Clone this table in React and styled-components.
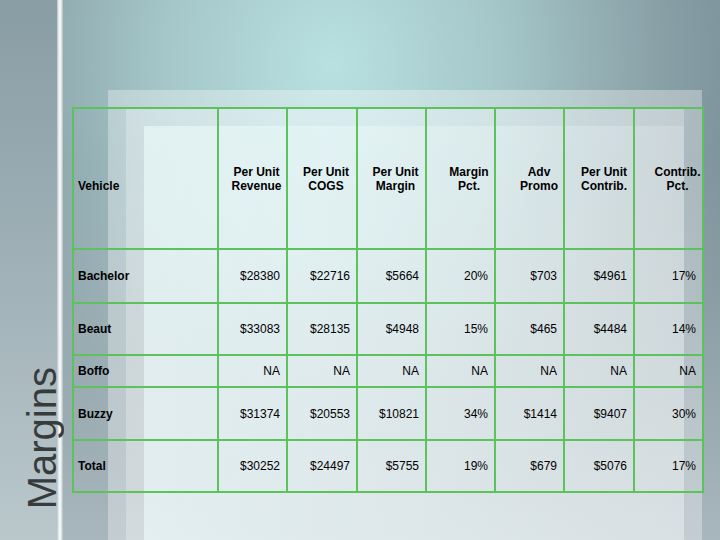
import styled, { createGlobalStyle } from 'styled-components';

const GlobalStyle = createGlobalStyle`
  html,
  body {
    margin: 0;
    padding: 0;
  }

  body {
    font-family: 'Liberation Sans', Arial, sans-serif;
  }
`;

const Slide = styled.div`
  width: 720px;
  height: 540px;
  display: flex;
  overflow: hidden;
`;

const Sidebar = styled.aside`
  width: 57px;
  flex: none;
  display: flex;
  flex-direction: column;
  justify-content: flex-end;
  padding-bottom: 31px;
  box-sizing: border-box;
  background: linear-gradient(180deg, #899da5 0%, #a2b3b9 55%, #bac8cc 100%);
`;

const Title = styled.h1`
  align-self: flex-start;
  margin: 0 0 0 22px;
  font-size: 40px;
  line-height: 40px;
  font-weight: normal;
  color: #383b3c;
  writing-mode: vertical-rl;
  transform: rotate(180deg);
  position: relative;
  z-index: 1;
`;

const Divider = styled.div`
  width: 6px;
  flex: none;
  background: linear-gradient(
    90deg,
    #b6c1c4 0%,
    #e9eeef 30%,
    #fbfcfc 50%,
    #e4e9ea 70%,
    #aebbbf 100%
  );
`;

// panels are stacked translucent sheets over the main gradient
const sheet = (a) => `linear-gradient(rgba(255,255,255,${a}), rgba(255,255,255,${a}))`;

const Stage = styled.main`
  flex: 1;
  padding: 107px 0 0 9px;
  box-sizing: border-box;
  background:
    linear-gradient(90deg, rgba(240, 255, 255, 0.55), rgba(232, 240, 242, 0.25)) 81px 126px / 540px 414px no-repeat,
    ${sheet(0.26)} 63px 108px / 558px 432px no-repeat,
    ${sheet(0.32)} 45px 90px / 594px 450px no-repeat,
    linear-gradient(180deg, rgba(225, 232, 234, 0) 30%, rgba(225, 232, 234, 0.45) 100%),
    radial-gradient(ellipse 430px 470px at 41% 12%, #b9e1e2 0%, #a4c6c9 40%, #8aa1a8 75%, #7a8f98 100%);
`;

const Grid = styled.table`
  width: 632px;
  border-collapse: collapse;
  table-layout: fixed;
  font-size: 12px;
  color: #000;
`;

const Row = styled.tr`
  height: ${(p) => p.$h}px;
`;

const Cell = styled.td`
  border: 2px solid #5cc25c;
  padding: 0;
  vertical-align: middle;
`;

const HeadCell = styled(Cell).attrs({ as: 'th' })`
  font-weight: bold;
  line-height: 14px;
  text-align: center;
  padding-left: ${(p) => p.$shift}px;
`;

const VehicleHead = styled(Cell).attrs({ as: 'th' })`
  font-weight: bold;
  text-align: left;
  line-height: 14px;
  padding: 14px 0 0 4px;
`;

const LabelCell = styled(Cell)`
  font-weight: bold;
  text-align: left;
  padding-left: 4px;
`;

const ValueCell = styled(Cell)`
  text-align: right;
  padding-right: 6px;
`;

const columns = [
  { w: 145 },
  { w: 69, head: ['Per Unit', 'Revenue'], shift: 8 },
  { w: 70, head: ['Per Unit', 'COGS'], shift: 8 },
  { w: 69, head: ['Per Unit', 'Margin'], shift: 8 },
  { w: 69, head: ['Margin', 'Pct.'], shift: 17 },
  { w: 69, head: ['Adv', 'Promo'], shift: 19 },
  { w: 70, head: ['Per Unit', 'Contrib.'], shift: 10 },
  { w: 69, head: ['Contrib.', 'Pct.'], shift: 18 },
];

const rows = [
  { name: 'Bachelor', h: 54, values: ['$28380', '$22716', '$5664', '20%', '$703', '$4961', '17%'] },
  { name: 'Beaut', h: 52, values: ['$33083', '$28135', '$4948', '15%', '$465', '$4484', '14%'] },
  { name: 'Boffo', h: 32, values: ['NA', 'NA', 'NA', 'NA', 'NA', 'NA', 'NA'] },
  { name: 'Buzzy', h: 53, values: ['$31374', '$20553', '$10821', '34%', '$1414', '$9407', '30%'] },
  { name: 'Total', h: 52, values: ['$30252', '$24497', '$5755', '19%', '$679', '$5076', '17%'] },
];

export default function App() {
  return (
    <>
      <GlobalStyle />
      <Slide>
        <Sidebar>
          <Title>Margins</Title>
        </Sidebar>
        <Divider />
        <Stage>
          <Grid>
            <colgroup>
              {columns.map((c, i) => (
                <col key={i} style={{ width: c.w }} />
              ))}
            </colgroup>
            <thead>
              <Row $h={141}>
                <VehicleHead>Vehicle</VehicleHead>
                {columns.slice(1).map((c) => (
                  <HeadCell key={c.head.join(' ')} $shift={c.shift}>
                    {c.head[0]}
                    <br />
                    {c.head[1]}
                  </HeadCell>
                ))}
              </Row>
            </thead>
            <tbody>
              {rows.map((r) => (
                <Row key={r.name} $h={r.h}>
                  <LabelCell>{r.name}</LabelCell>
                  {r.values.map((v, i) => (
                    <ValueCell key={i}>{v}</ValueCell>
                  ))}
                </Row>
              ))}
            </tbody>
          </Grid>
        </Stage>
      </Slide>
    </>
  );
}
